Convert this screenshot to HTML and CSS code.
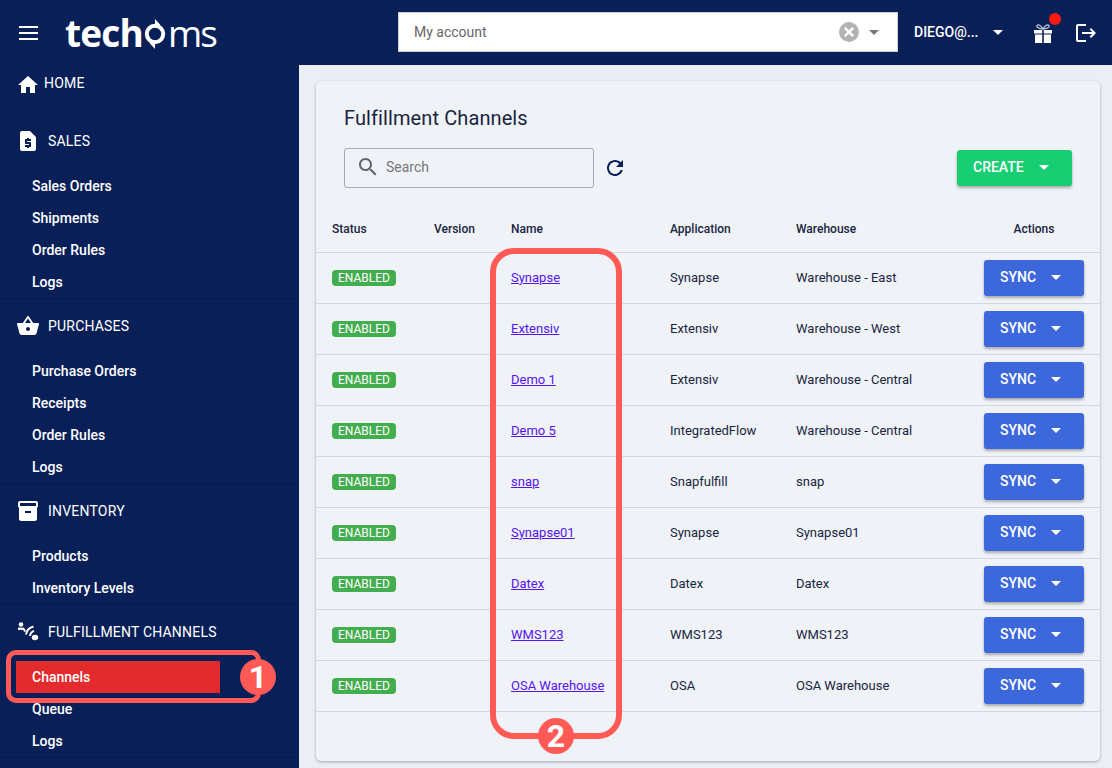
FILE: index.html
```html
<!DOCTYPE html>
<html lang="en">
<head>
    <meta charset="UTF-8">
    <meta name="viewport" content="width=device-width, initial-scale=1.0">
    <title>Fulfillment Channels</title>
    <link rel="stylesheet" href="styles.css">
</head>
<body>
    <header class="topbar">
        <div class="burger"><span></span><span></span><span></span></div>
        <div class="logo">
            <span class="logo-bold">tech</span>
            <svg class="logo-o" viewBox="0 0 22 30"><circle cx="11" cy="15" r="8.200" fill="none" stroke="#fff" stroke-width="4"/><path d="M11 0l5.500 6-5.500 3zM11 30l-5.500-6 5.500-3z" fill="#fff"/></svg>
            <span class="logo-light">ms</span>
        </div>
        <div class="account-select">
            <span class="account-text">My account</span>
            <svg class="clear-icon" viewBox="0 0 20 20"><circle cx="10" cy="10" r="10" fill="#b3b3b3"/><path d="M5.800 5.800l8.400 8.400m0-8.400l-8.400 8.400" stroke="#fff" stroke-width="2.600"/></svg>
            <span class="caret caret-grey"></span>
        </div>
        <div class="user">DIEGO@...</div>
        <span class="caret user-caret"></span>
        <div class="gift">
            <svg viewBox="0 0 20 22" width="20" height="22"><path d="M10 7C8 3 5 2 4 3.500S6 7 10 7c4 0 7-2 6-3.500S12 3 10 7z" fill="none" stroke="#c9d0e0" stroke-width="1.200"/><path d="M1 8h8.200v3.500H1zM10.800 8H19v3.500h-8.200zM2 12.500h7.200V21H2zM10.800 12.500H18V21h-7.200z" fill="#fff"/></svg>
            <span class="gift-dot"></span>
        </div>
        <svg class="logout" viewBox="0 0 24 24"><path d="M17 7l-1.410 1.410L18.170 11H8v2h10.170l-2.580 2.580L17 17l5-5zM4 5h8V3H4c-1.100 0-2 .9-2 2v14c0 1.100.9 2 2 2h8v-2H4V5z" fill="#fff"/></svg>
    </header>

    <div class="layout">
        <nav class="sidebar">
            <section class="nav-section nav-home">
                <div class="nav-head">
                    <svg viewBox="0 0 24 24"><path d="M10 20v-6h4v6h5v-8h3L12 3 2 12h3v8z"/></svg>
                    HOME
                </div>
            </section>
            <section class="nav-section">
                <div class="nav-head">
                    <svg viewBox="0 0 24 24"><path d="M14 2H6c-1.100 0-1.990.9-1.990 2L4 20c0 1.100.89 2 1.990 2H18c1.100 0 2-.9 2-2V8l-6-6zm1 10h-4v1h3c.55 0 1 .45 1 1v3c0 .55-.45 1-1 1h-1v1h-2v-1H9v-2h4v-1h-3c-.55 0-1-.45-1-1v-3c0-.55.45-1 1-1h1V9h2v1h2v2z"/></svg>
                    SALES
                </div>
                <a class="nav-item">Sales Orders</a>
                <a class="nav-item">Shipments</a>
                <a class="nav-item">Order Rules</a>
                <a class="nav-item">Logs</a>
            </section>
            <section class="nav-section">
                <div class="nav-head">
                    <svg viewBox="0 0 24 24"><path d="M17.210 9l-4.380-6.560c-.19-.28-.51-.42-.83-.42-.32 0-.64.14-.83.43L6.790 9H2c-.55 0-1 .45-1 1 0 .09.01.18.04.27l2.540 9.270c.23.84 1 1.460 1.920 1.460h13c.92 0 1.690-.62 1.930-1.460l2.540-9.270L23 10c0-.55-.45-1-1-1h-4.790zM9 9l3-4.400L15 9H9zm3 8c-1.100 0-2-.9-2-2s.9-2 2-2 2 .9 2 2-.9 2-2 2z"/></svg>
                    PURCHASES
                </div>
                <a class="nav-item">Purchase Orders</a>
                <a class="nav-item">Receipts</a>
                <a class="nav-item">Order Rules</a>
                <a class="nav-item">Logs</a>
            </section>
            <section class="nav-section">
                <div class="nav-head">
                    <svg viewBox="0 0 24 24"><path d="M20 2H4c-1 0-2 .9-2 2v3.010c0 .72.43 1.340 1 1.690V20c0 1.100 1.100 2 2 2h14c.9 0 2-.9 2-2V8.700c.57-.35 1-.97 1-1.690V4c0-1.100-1-2-2-2zm-5 12H9v-2h6v2zm5-7H4V4l16-.02V7z"/></svg>
                    INVENTORY
                </div>
                <a class="nav-item">Products</a>
                <a class="nav-item">Inventory Levels</a>
            </section>
            <section class="nav-section">
                <div class="nav-head">
                    <svg viewBox="0 0 24 24"><circle cx="5" cy="4.500" r="2.300"/><path d="M2 7.500l6 .2 2 3.300-1.700 1-1.300-2.200-5 .3z"/><path d="M10 14.500A10 10 0 0 1 17.500 6.500M14 16A6 6 0 0 1 18 10.800" fill="none" stroke="#fff" stroke-width="1.900"/><ellipse cx="19" cy="17.500" rx="3.200" ry="2.800"/></svg>
                    FULFILLMENT CHANNELS
                </div>
                <a class="nav-item active">Channels</a>
                <a class="nav-item">Queue</a>
                <a class="nav-item">Logs</a>
            </section>
        </nav>

        <main class="content">
            <div class="card">
                <h2 class="card-title">Fulfillment Channels</h2>
                <div class="toolbar">
                    <div class="search">
                        <svg viewBox="0 0 24 24"><path d="M15.500 14h-.79l-.28-.27C15.410 12.590 16 11.110 16 9.500 16 5.910 13.090 3 9.500 3S3 5.910 3 9.500 5.910 16 9.500 16c1.610 0 3.090-.59 4.230-1.570l.27.28v.79l5 4.990L20.490 19l-4.990-5zm-6 0C7.010 14 5 11.990 5 9.500S7.010 5 9.500 5 14 7.010 14 9.500 11.990 14 9.500 14z" fill="#5f6672"/></svg>
                        <span>Search</span>
                    </div>
                    <svg class="refresh" viewBox="0 0 24 24"><path d="M17.650 6.350C16.200 4.900 14.210 4 12 4c-4.420 0-7.990 3.580-7.990 8s3.570 8 7.990 8c3.730 0 6.840-2.550 7.730-6h-2.080c-.82 2.330-3.040 4-5.650 4-3.310 0-6-2.690-6-6s2.690-6 6-6c1.660 0 3.140.69 4.220 1.780L13 11h7V4l-2.350 2.350z" fill="#081f57"/></svg>
                    <button class="btn btn-create">CREATE <span class="caret"></span></button>
                </div>
                <table class="channels">
                    <colgroup>
                        <col class="col-status"><col class="col-version"><col class="col-name"><col class="col-app"><col class="col-wh"><col>
                    </colgroup>
                    <thead>
                        <tr><th>Status</th><th>Version</th><th>Name</th><th>Application</th><th>Warehouse</th><th class="actions">Actions</th></tr>
                    </thead>
                    <tbody>
                        <tr><td><span class="badge">ENABLED</span></td><td></td><td><a href="#">Synapse</a></td><td>Synapse</td><td>Warehouse - East</td><td class="actions"><button class="btn btn-sync">SYNC <span class="caret"></span></button></td></tr>
                        <tr><td><span class="badge">ENABLED</span></td><td></td><td><a href="#">Extensiv</a></td><td>Extensiv</td><td>Warehouse - West</td><td class="actions"><button class="btn btn-sync">SYNC <span class="caret"></span></button></td></tr>
                        <tr><td><span class="badge">ENABLED</span></td><td></td><td><a href="#">Demo 1</a></td><td>Extensiv</td><td>Warehouse - Central</td><td class="actions"><button class="btn btn-sync">SYNC <span class="caret"></span></button></td></tr>
                        <tr><td><span class="badge">ENABLED</span></td><td></td><td><a href="#">Demo 5</a></td><td>IntegratedFlow</td><td>Warehouse - Central</td><td class="actions"><button class="btn btn-sync">SYNC <span class="caret"></span></button></td></tr>
                        <tr><td><span class="badge">ENABLED</span></td><td></td><td><a href="#">snap</a></td><td>Snapfulfill</td><td>snap</td><td class="actions"><button class="btn btn-sync">SYNC <span class="caret"></span></button></td></tr>
                        <tr><td><span class="badge">ENABLED</span></td><td></td><td><a href="#">Synapse01</a></td><td>Synapse</td><td>Synapse01</td><td class="actions"><button class="btn btn-sync">SYNC <span class="caret"></span></button></td></tr>
                        <tr><td><span class="badge">ENABLED</span></td><td></td><td><a href="#">Datex</a></td><td>Datex</td><td>Datex</td><td class="actions"><button class="btn btn-sync">SYNC <span class="caret"></span></button></td></tr>
                        <tr><td><span class="badge">ENABLED</span></td><td></td><td><a href="#">WMS123</a></td><td>WMS123</td><td>WMS123</td><td class="actions"><button class="btn btn-sync">SYNC <span class="caret"></span></button></td></tr>
                        <tr><td><span class="badge">ENABLED</span></td><td></td><td><a href="#">OSA Warehouse</a></td><td>OSA</td><td>OSA Warehouse</td><td class="actions"><button class="btn btn-sync">SYNC <span class="caret"></span></button></td></tr>
                    </tbody>
                </table>
            </div>
        </main>
    </div>

    <!-- annotations drawn over the screenshot -->
    <div class="mark mark-channels"></div>
    <div class="step step-one">1</div>
    <div class="mark mark-names"></div>
    <div class="step step-two">2</div>
</body>
</html>
```

FILE: styles.css
```css
/* CSS styles */
html, body {
    height: 768px;
    overflow: hidden;
}

body {
    margin: 0;
    background-color: #ebeef4;
    font-family: Roboto, "Liberation Sans", sans-serif;
    font-size: 13px;
    color: #1a2540;
}

.topbar {
    display: flex;
    align-items: center;
    height: 65px;
    background-color: #081f57;
    color: #fff;
}

.burger {
    display: flex;
    flex-direction: column;
    gap: 4px;
    width: 19px;
    margin-left: 19px;
}

.burger span {
    height: 2px;
    background-color: #fff;
}

.logo {
    display: flex;
    align-items: center;
    width: 333px;
    margin-left: 27px;
    height: 40px;
    font-family: "Open Sans", sans-serif;
    font-size: 37px;
    letter-spacing: -0.8px;
    line-height: 40px;
}

.logo-bold {
    font-weight: 700;
}

.logo-light {
    font-weight: 400;
    letter-spacing: -2px;
    margin-left: 2px;
}

.logo-o {
    width: 22px;
    height: 30px;
    margin: 3px 0 0 1px;
}

.account-select {
    display: flex;
    align-items: center;
    box-sizing: border-box;
    width: 500px;
    height: 40px;
    margin-top: -1px;
    padding: 0 18px 0 15px;
    background-color: #fff;
    border: 1px solid #ccc;
    color: #666;
    font-size: 14px;
}

.account-text {
    flex: 1;
}

.clear-icon {
    width: 20px;
    height: 20px;
    margin-right: 10px;
}

.caret {
    display: inline-block;
    width: 0;
    height: 0;
    border-left: 5px solid transparent;
    border-right: 5px solid transparent;
    border-top: 5px solid #fff;
    vertical-align: middle;
}

.caret-grey {
    border-top-color: #777;
}

.user {
    margin-left: 16px;
    width: 79px;
    font-size: 14px;
    font-weight: 500;
    margin-top: -1px;
}

.user-caret {
    margin-right: 31px;
}

.gift {
    position: relative;
    width: 20px;
    height: 22px;
    margin-top: 1px;
    margin-left: -1px;
}

.gift-dot {
    position: absolute;
    top: -9px;
    left: 16px;
    width: 12px;
    height: 12px;
    background-color: #f91b0f;
    border-radius: 50%;
}

.logout {
    width: 24px;
    height: 24px;
    margin-left: 21px;
}

.layout {
    display: flex;
    height: 703px;
}

.sidebar {
    flex: none;
    width: 299px;
    background-color: #081f57;
    color: #fff;
    font-weight: 500;
    font-size: 14px;
    border-top: 1px solid #061a4b;
    box-sizing: border-box;
}

.nav-section {
    padding-top: 9px;
    border-bottom: 1px solid #061a4b;
}

.nav-home {
    height: 47px;
    padding: 0;
}

.nav-head {
    display: flex;
    align-items: center;
    gap: 8px;
    height: 36px;
    padding-left: 16px;
    margin-bottom: 11px;
    font-weight: 400;
    letter-spacing: 0.2px;
}

.nav-home .nav-head {
    gap: 4px;
    height: 34px;
    margin: 0;
}

.nav-home svg {
    margin-top: 3px;
}

.nav-head svg {
    width: 24px;
    height: 24px;
    fill: #fff;
    flex: none;
}

.nav-item {
    display: block;
    width: 204px;
    height: 32px;
    margin-left: 16px;
    padding-left: 16px;
    box-sizing: border-box;
    line-height: 32px;
}

.nav-item.active {
    background-color: #e32a2c;
}

.content {
    flex: 1;
    padding: 16px 12px 7px 17px;
    min-width: 0;
}

.card {
    height: 100%;
    box-sizing: border-box;
    background-color: #eff2f7;
    border-radius: 5px;
    box-shadow: 0 1px 3px rgba(0, 0, 0, 0.3);
    overflow: hidden;
}

.card-title {
    margin: 0;
    padding: 25px 28px 0;
    font-size: 20px;
    font-weight: 400;
    letter-spacing: 0.1px;
    line-height: 24px;
    color: #1a2540;
}

.toolbar {
    display: flex;
    align-items: center;
    margin-top: 18px;
    padding: 0 28px;
}

.search {
    display: flex;
    align-items: center;
    gap: 6px;
    box-sizing: border-box;
    width: 250px;
    height: 40px;
    padding: 0 0 2px 11px;
    border: 1px solid #a5a9b2;
    border-radius: 3px;
    color: #777;
    font-size: 14px;
}

.search svg {
    width: 24px;
    height: 24px;
}

.refresh {
    width: 24px;
    height: 24px;
    margin-left: 9px;
}

.btn {
    display: inline-flex;
    align-items: center;
    gap: 15px;
    border: none;
    border-radius: 3px;
    padding: 0 0 2px 16px;
    color: #fff;
    font-family: inherit;
    font-size: 14px;
    font-weight: 500;
    box-shadow: 0 2px 3px rgba(0, 0, 0, 0.3);
}

.btn-create {
    width: 115px;
    height: 36px;
    margin-left: auto;
    background-color: #17cf72;
}

.btn-sync {
    width: 100px;
    height: 36px;
    padding-bottom: 1px;
    margin-top: 1px;
    background-color: #3d68db;
    vertical-align: middle;
}

.channels {
    width: 100%;
    margin-top: 16px;
    border-collapse: collapse;
    table-layout: fixed;
}

.col-status {
    width: 102px;
}

.col-version {
    width: 77px;
}

.col-name {
    width: 159px;
}

.col-app {
    width: 126px;
}

.col-wh {
    width: 188px;
}

.channels th,
.channels td {
    padding: 0 0 0 16px;
    text-align: left;
    border-bottom: 1px solid #d3d6dc;
}

.channels th {
    height: 48px;
    padding-top: 2px;
    box-sizing: border-box;
    font-size: 12px;
    font-weight: 500;
}

.channels td {
    height: 49px;
    padding-bottom: 1px;
    box-sizing: content-box;
    font-size: 13px;
}

.channels .actions {
    padding-right: 16px;
    text-align: center;
}

.channels a {
    color: #5514f2;
}

.badge {
    display: inline-block;
    margin-top: 1px;
    padding: 0 6px;
    height: 16px;
    line-height: 16px;
    background-color: #43ae4f;
    border-radius: 4px;
    color: #fff;
    font-size: 12px;
    font-weight: 400;
    vertical-align: middle;
}

.mark {
    position: absolute;
    box-sizing: border-box;
    border: 5px solid #ff5a55;
}

.mark-channels {
    left: 6px;
    top: 650px;
    width: 255px;
    height: 53px;
    border-radius: 10px;
}

.mark-names {
    left: 490px;
    top: 248px;
    width: 132px;
    height: 491px;
    border-width: 6px;
    border-radius: 24px;
}

.step {
    position: absolute;
    width: 36px;
    height: 36px;
    border-radius: 50%;
    background-color: #ff5a55;
    color: #fff;
    font-size: 32px;
    font-weight: 700;
    line-height: 36px;
    text-align: center;
}

.step-one {
    left: 240px;
    top: 659px;
}

.step-two {
    left: 538px;
    top: 718px;
}
```
